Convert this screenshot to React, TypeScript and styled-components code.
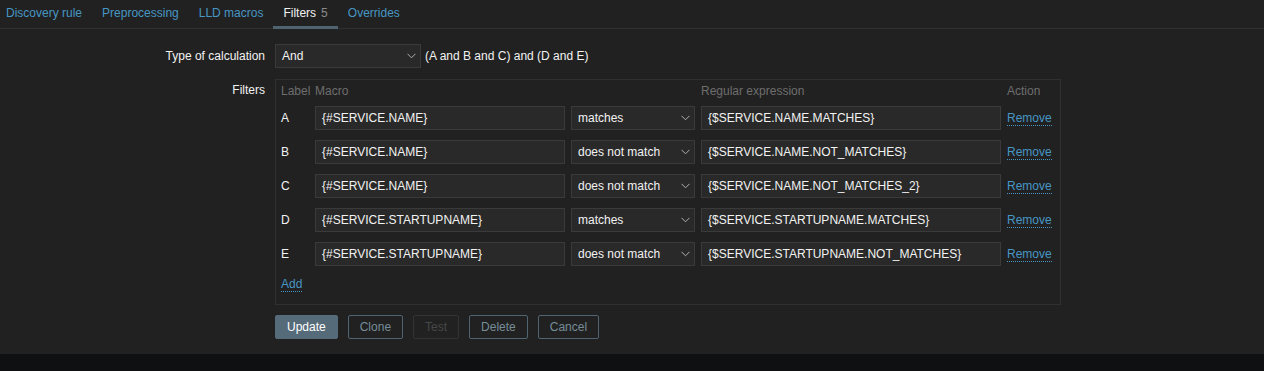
import React from 'react';
import styled, { createGlobalStyle } from 'styled-components';

const GlobalStyle = createGlobalStyle`
  html, body {
    margin: 0;
    padding: 0;
    background: #0e1012;
  }

  body {
    font-family: "Liberation Sans", Arial, sans-serif;
    font-size: 12px;
    color: #f2f2f2;
  }
`;

const Page = styled.div`
  background: #212121;
  padding-bottom: 15px;
`;

const TabNav = styled.ul`
  display: flex;
  list-style: none;
  margin: 0 0 0 -4px;
  padding: 0;
  height: 28px;
  border-bottom: 1px solid #303030;
`;

const Tab = styled.li<{ $active?: boolean }>`
  display: flex;
  align-items: center;
  height: 29px;
  margin-bottom: -1px;
  padding: 0 10px 3px;
  box-sizing: border-box;
  color: ${(p) => (p.$active ? '#f2f2f2' : '#4796c4')};
  box-shadow: ${(p) => (p.$active ? 'inset 0 -3px 0 #4f6371' : 'none')};
  cursor: pointer;
  white-space: nowrap;
`;

const Count = styled.span`
  color: #8a8a8a;
  margin-left: 5px;
`;

const Form = styled.div`
  display: grid;
  grid-template-columns: 265px auto;
  column-gap: 10px;
  row-gap: 10px;
  padding-top: 15px;
  justify-content: start;
`;

const FieldLabel = styled.div<{ $top?: boolean }>`
  text-align: right;
  line-height: ${(p) => (p.$top ? '14px' : '24px')};
  padding-top: ${(p) => (p.$top ? '4px' : '0')};
`;

const Field = styled.div<{ $gapBelow?: number }>`
  display: flex;
  align-items: center;
  gap: 4px;
  margin-bottom: ${(p) => p.$gapBelow ?? 0}px;
`;

const SelectBox = styled.div<{ $width: number }>`
  width: ${(p) => p.$width}px;
  height: 24px;
  box-sizing: border-box;
  border: 1px solid #3a3a3a;
  background: #292929;
  display: flex;
  align-items: center;
  justify-content: space-between;
  padding: 0 4px 0 6px;
  white-space: nowrap;
`;

const TextInput = styled.div<{ $width: number }>`
  width: ${(p) => p.$width}px;
  height: 24px;
  box-sizing: border-box;
  border: 1px solid #3a3a3a;
  background: #292929;
  display: flex;
  align-items: center;
  padding: 0 6px;
  white-space: nowrap;
  overflow: hidden;
`;

const FilterBox = styled.div`
  width: 786px;
  box-sizing: border-box;
  border: 1px solid #303030;
  padding: 4px 9px 12px 5px;
`;

const FilterGrid = styled.div`
  display: grid;
  grid-template-columns: 28px 250px 124px 300px auto;
  column-gap: 6px;
  row-gap: 10px;
  align-items: center;
`;

const HeadCell = styled.div`
  color: #6e6e6e;
  line-height: 14px;
  white-space: nowrap;
  margin-bottom: -2px;
`;

const RowLabel = styled.div`
  line-height: 24px;
`;

const Link = styled.span`
  color: #4796c4;
  border-bottom: 1px dotted #4796c4;
  cursor: pointer;
  line-height: 14px;
  justify-self: start;
`;

const AddLink = styled(Link)`
  display: inline-block;
  margin-top: 11px;
`;

const Buttons = styled.div`
  grid-column: 2;
  display: flex;
  gap: 10px;
`;

const Button = styled.button<{ $variant?: 'main' | 'alt' | 'disabled' }>`
  height: 24px;
  padding: 0 11px;
  font-family: inherit;
  font-size: 12px;
  border-radius: 2px;
  border: 1px solid
    ${(p) => (p.$variant === 'main' ? '#566b79' : p.$variant === 'disabled' ? '#333333' : '#4f6371')};
  background: ${(p) => (p.$variant === 'main' ? '#566b79' : 'transparent')};
  color: ${(p) => (p.$variant === 'main' ? '#ffffff' : p.$variant === 'disabled' ? '#484848' : '#768d99')};
  cursor: ${(p) => (p.$variant === 'disabled' ? 'default' : 'pointer')};
`;

function Chevron () {
  return (
    <svg width='9' height='6' viewBox='0 0 9 6'>
      <path d='M0.5 0.8 L4.5 4.8 L8.5 0.8' fill='none' stroke='#b0b0b0' strokeWidth='1' />
    </svg>
  );
}

function Select ({ value, width }: { value: string, width: number }) {
  return (
    <SelectBox $width={width}>
      <span>{value}</span>
      <Chevron />
    </SelectBox>
  );
}

const filters = [
  { label: 'A', macro: '{#SERVICE.NAME}', op: 'matches', value: '{$SERVICE.NAME.MATCHES}' },
  { label: 'B', macro: '{#SERVICE.NAME}', op: 'does not match', value: '{$SERVICE.NAME.NOT_MATCHES}' },
  { label: 'C', macro: '{#SERVICE.NAME}', op: 'does not match', value: '{$SERVICE.NAME.NOT_MATCHES_2}' },
  { label: 'D', macro: '{#SERVICE.STARTUPNAME}', op: 'matches', value: '{$SERVICE.STARTUPNAME.MATCHES}' },
  { label: 'E', macro: '{#SERVICE.STARTUPNAME}', op: 'does not match', value: '{$SERVICE.STARTUPNAME.NOT_MATCHES}' }
];

const tabs = ['Discovery rule', 'Preprocessing', 'LLD macros', 'Filters', 'Overrides'];

export default function App () {
  return (
    <>
      <GlobalStyle />
      <Page>
        <TabNav>
          {tabs.map((t) => (
            <Tab $active={t === 'Filters'} key={t}>
              {t}
              {t === 'Filters' && <Count>5</Count>}
            </Tab>
          ))}
        </TabNav>
        <Form>
          <FieldLabel>Type of calculation</FieldLabel>
          <Field $gapBelow={1}>
            <Select value='And' width={146} />
            <span>(A and B and C) and (D and E)</span>
          </Field>

          <FieldLabel $top>Filters</FieldLabel>
          <FilterBox>
            <FilterGrid>
              <HeadCell>Label</HeadCell>
              <HeadCell>Macro</HeadCell>
              <HeadCell />
              <HeadCell>Regular expression</HeadCell>
              <HeadCell>Action</HeadCell>
              {filters.map((f) => (
                <React.Fragment key={f.label}>
                  <RowLabel>{f.label}</RowLabel>
                  <TextInput $width={250}>{f.macro}</TextInput>
                  <Select value={f.op} width={124} />
                  <TextInput $width={300}>{f.value}</TextInput>
                  <Link>Remove</Link>
                </React.Fragment>
              ))}
            </FilterGrid>
            <AddLink>Add</AddLink>
          </FilterBox>

          <Buttons>
            <Button $variant='main'>Update</Button>
            <Button $variant='alt'>Clone</Button>
            <Button $variant='disabled'>Test</Button>
            <Button $variant='alt'>Delete</Button>
            <Button $variant='alt'>Cancel</Button>
          </Buttons>
        </Form>
      </Page>
    </>
  );
}
